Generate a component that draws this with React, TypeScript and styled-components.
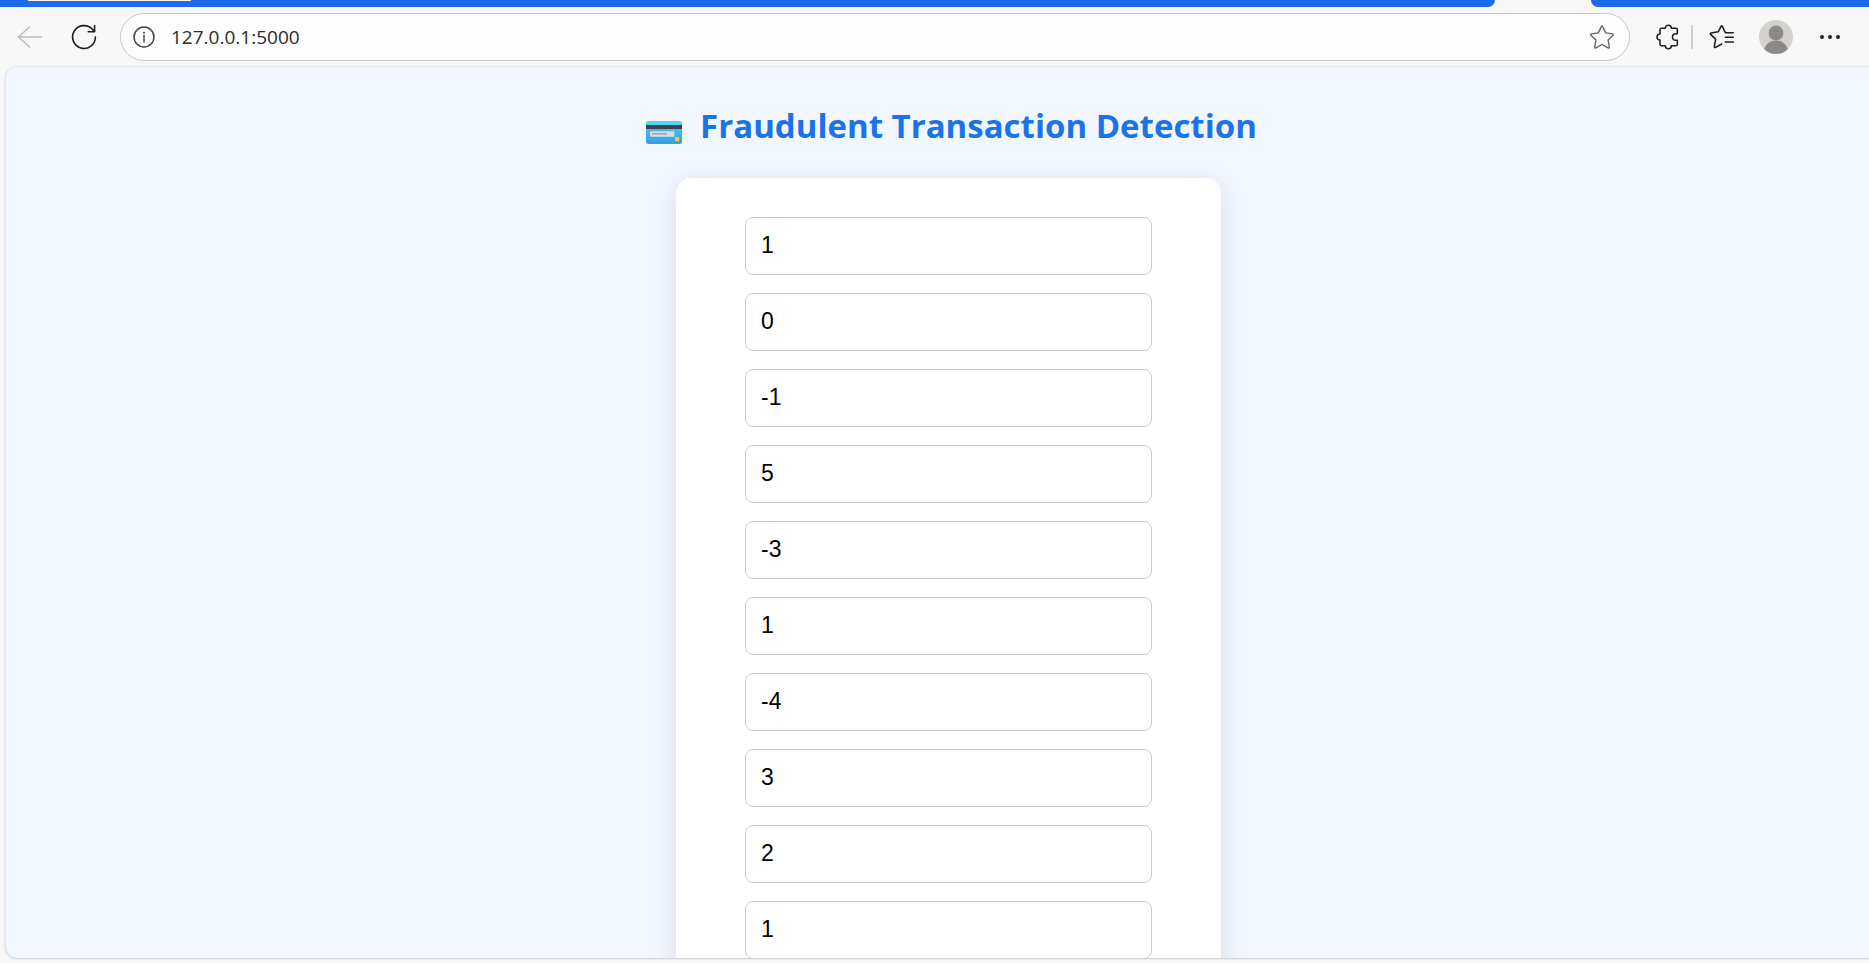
import React from "react";
import styled, { createGlobalStyle } from "styled-components";

const GlobalStyle = createGlobalStyle`
  *, *::before, *::after { box-sizing: border-box; }
  body {
    margin: 0;
    background: #f7f7f7;
    font-family: "Open Sans", "Noto Sans", sans-serif;
  }
`;

const Browser = styled.div`
  display: flex;
  flex-direction: column;
  height: 100vh;
  overflow: hidden;
`;

const TabStrip = styled.div`
  display: flex;
  flex: none;
  height: 7px;
`;

const TabsBefore = styled.div`
  flex: 1;
  padding-left: 28px;
  background: #2169eb;
  border-bottom-right-radius: 7px;
`;

const InactiveTabEdge = styled.div`
  width: 163px;
  height: 1px;
  background: #f7f7f7;
`;

const ActiveTab = styled.div`
  width: 96px;
`;

const TabsAfter = styled.div`
  width: 278px;
  background: #2169eb;
  border-bottom-left-radius: 7px;
`;

const Toolbar = styled.header`
  display: flex;
  flex: none;
  align-items: center;
  height: 59px;
  padding: 0 24px 0 16px;
`;

const IconButton = styled.button<{ $width?: number; $gap?: number }>`
  display: flex;
  flex: none;
  align-items: center;
  justify-content: center;
  width: ${({ $width = 28 }) => $width}px;
  height: 36px;
  margin: 0 0 0 ${({ $gap = 0 }) => $gap}px;
  padding: 0;
  border: 0;
  background: none;
  color: #1f1f1f;

  &:disabled { color: #bdbdbd; }

  svg { display: block; }
`;

const AddressBar = styled.div`
  display: flex;
  flex: 1;
  align-items: center;
  height: 48px;
  margin-left: 22px;
  padding: 0 13px 0 8px;
  border: 1px solid #c8c8c8;
  border-radius: 24px;
  background: #fdfdfd;
`;

const AddressInput = styled.input`
  flex: 1;
  min-width: 0;
  margin-left: 12px;
  padding: 0;
  border: 0;
  outline: 0;
  background: transparent;
  color: #2b2b2b;
  font: 400 19px/28px "Open Sans", "Noto Sans", sans-serif;
`;

const Divider = styled.div`
  flex: none;
  width: 2px;
  height: 24px;
  margin-left: 9px;
  background: #cfcfcf;
`;

const Viewport = styled.main`
  flex: 1;
  min-height: 0;
  margin: 0 0 5px 5px;
  padding-left: 22px;
  overflow: hidden;
  border: 1px solid #e6e6e6;
  border-right: 0;
  border-bottom: 0;
  border-radius: 12px 0 0 12px;
  background: #f2f6ff;
  box-shadow: 0 1px 2px #cccccc;
`;

const Title = styled.h1`
  display: flex;
  align-items: center;
  justify-content: center;
  gap: 18px;
  margin: 34px 0 27px;
  color: #1a73e8;
  font-size: 33px;
  font-weight: 700;
  line-height: 50px;

  svg { flex: none; margin: 12px 0 0 6px; }
`;

const Card = styled.form`
  display: flex;
  flex-direction: column;
  align-items: center;
  gap: 18px;
  width: 545px;
  margin: 0 auto;
  padding: 39px;
  border-radius: 15px;
  background: #ffffff;
  box-shadow: 0 5px 26px rgba(0, 0, 0, 0.1);
`;

const Field = styled.input`
  width: 407px;
  height: 58px;
  padding: 0 15px 2px;
  border: 1px solid #cccccc;
  border-radius: 8px;
  background: #ffffff;
  color: #000000;
  font: 400 23px/28px "Liberation Sans", Arial, sans-serif;
`;

const BackIcon = () => (
  <svg width="28" height="28" viewBox="0 0 28 28" fill="none" stroke="currentColor" strokeWidth="1.5" strokeLinecap="round" strokeLinejoin="round">
    <path d="M25.5 14H2.5M13.5 4 2.5 14l11 10" />
  </svg>
);

const ReloadIcon = () => (
  <svg width="28" height="28" viewBox="0 0 28 28" fill="none" stroke="currentColor" strokeWidth="1.6" strokeLinecap="round" strokeLinejoin="round">
    <path d="M25.4 14a11.4 11.4 0 1 1-3-7.7L24.4 8.6M24.6 2.6v6.2h-6.4" />
  </svg>
);

const InfoIcon = () => (
  <svg width="24" height="24" viewBox="0 0 24 24" fill="none" stroke="#444444" strokeWidth="1.5">
    <circle cx="12" cy="12" r="10" />
    <path d="M12 10.5v6.3" strokeLinecap="round" />
    <circle cx="12" cy="7.7" r="1" fill="#444444" stroke="none" />
  </svg>
);

const StarIcon = () => (
  <svg width="28" height="28" viewBox="0 0 28 28" fill="none" stroke="#666666" strokeWidth="1.4" strokeLinejoin="round">
    <path d="M13.3 3.6q.7-1.3 1.4 0l3 6.3 6.9 1q1.4.3.5 1.3l-5 4.9 1.2 6.9q.1 1.4-1.2.8L14 21.5l-6.1 3.3q-1.3.6-1.2-.8l1.2-6.9-5-4.9q-.9-1 .5-1.3l6.9-1z" />
  </svg>
);

const PuzzleIcon = () => (
  <svg width="26" height="26" viewBox="0 0 78 78" fill="none" stroke="currentColor" strokeWidth="4.6" strokeLinejoin="round">
    <path d="M19 13h12c0-12 18-12 18 0h14q4 0 4 4v12H63c-14 0-14 20 0 20h4v12q0 4-4 4H49c0 12-18 12-18 0H19q-4 0-4-4V48C3 48 3 30 15 30V17q0-4 4-4z" />
  </svg>
);

const FavoritesIcon = () => (
  <svg width="26" height="26" viewBox="0 0 78 78" fill="none" stroke="currentColor" strokeWidth="4.6" strokeLinecap="round" strokeLinejoin="round">
    <path d="M73 26H49L40 7q-2-3-4 0L28 23 6 27q-4 1-1 4l15 15-4 22q0 4 4 2l18-10M49 40h24M49 54h24" />
  </svg>
);

const Avatar = () => (
  <svg width="34" height="34" viewBox="0 0 34 34">
    <circle cx="17" cy="17" r="17" fill="#d3d1cd" />
    <circle cx="17" cy="13" r="7.4" fill="#8d8986" />
    <path d="M5 29a12.7 12.7 0 0 1 24 0 17 17 0 0 1-24 0z" fill="#8d8986" />
  </svg>
);

const MoreIcon = () => (
  <svg width="24" height="24" viewBox="0 0 24 24" fill="currentColor">
    <circle cx="3" cy="12" r="2" />
    <circle cx="11" cy="12" r="2" />
    <circle cx="19" cy="12" r="2" />
  </svg>
);

const CreditCardIcon = () => (
  <svg width="36" height="23" viewBox="0 0 108 69" aria-hidden="true">
    <defs>
      <linearGradient id="cardFace" x1="0" y1="0" x2="0" y2="1">
        <stop offset="0" stopColor="#50dcf5" />
        <stop offset="0.4" stopColor="#46b9ea" />
        <stop offset="1" stopColor="#2f9fe2" />
      </linearGradient>
    </defs>
    <rect width="108" height="69" rx="7" fill="url(#cardFace)" />
    <rect y="12" width="108" height="12" fill="#423f4c" />
    <rect x="12" y="31" width="73" height="16" rx="2" fill="#d9dde3" />
    <rect x="18" y="36" width="45" height="5" fill="#a6a9b2" />
    <rect x="87" y="48" width="13" height="13" rx="2" fill="#f5c542" />
  </svg>
);

const values = ["1", "0", "-1", "5", "-3", "1", "-4", "3", "2", "1"];

export default function App() {
  return (
    <>
      <GlobalStyle />
      <Browser>
        <TabStrip>
          <TabsBefore><InactiveTabEdge /></TabsBefore>
          <ActiveTab />
          <TabsAfter />
        </TabStrip>
        <Toolbar>
          <IconButton type="button" aria-label="Back" disabled><BackIcon /></IconButton>
          <IconButton type="button" aria-label="Refresh" $gap={26}><ReloadIcon /></IconButton>
          <AddressBar>
            <IconButton type="button" aria-label="View site information" $width={30}><InfoIcon /></IconButton>
            <AddressInput aria-label="Address" defaultValue="127.0.0.1:5000" spellCheck={false} />
            <IconButton type="button" aria-label="Add to favorites"><StarIcon /></IconButton>
          </AddressBar>
          <IconButton type="button" aria-label="Extensions" $gap={24}><PuzzleIcon /></IconButton>
          <Divider />
          <IconButton type="button" aria-label="Favorites" $gap={15}><FavoritesIcon /></IconButton>
          <IconButton type="button" aria-label="Profile" $width={34} $gap={23}><Avatar /></IconButton>
          <IconButton type="button" aria-label="Settings and more" $gap={24}><MoreIcon /></IconButton>
        </Toolbar>
        <Viewport>
          <Title><CreditCardIcon />Fraudulent Transaction Detection</Title>
          <Card>
            {values.map((value, index) => (
              <Field key={index} type="text" aria-label={`Feature ${index + 1}`} defaultValue={value} />
            ))}
          </Card>
        </Viewport>
      </Browser>
    </>
  );
}
